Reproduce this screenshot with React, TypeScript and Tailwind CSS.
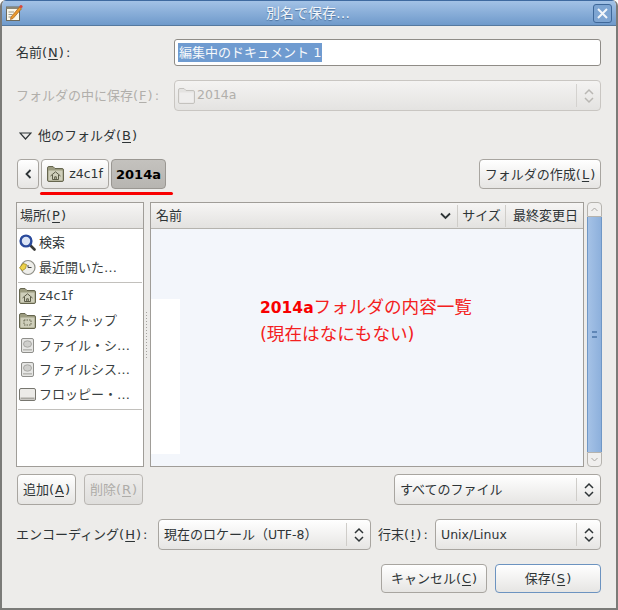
import * as React from "react"

const FONT = "font-['DejaVu_Sans','Noto_Sans_CJK_JP',sans-serif]"

function Mn({ children }: { children: React.ReactNode }) {
  return <span className="px-px underline underline-offset-2">{children}</span>
}

function Colon() {
  return <span className="ml-[2px]">:</span>
}

function Latin({ children }: { children: React.ReactNode }) {
  return <span className="text-[12.5px]">{children}</span>
}

function UpDown({ dim = false }: { dim?: boolean }) {
  const c = dim ? "#b9b7b3" : "#2e3436"
  return (
    <svg width="12" height="18" viewBox="0 0 12 18" fill="none" stroke={c} strokeWidth="1.5">
      <path d="M2 7 L6 3 L10 7" />
      <path d="M2 11 L6 15 L10 11" />
    </svg>
  )
}

function Combo({ className, children, dim = false }: { className: string; children: React.ReactNode; dim?: boolean }) {
  return (
    <div
      className={`flex items-center rounded-[4px] border ${
        dim
          ? "border-[#c9c6c2] bg-gradient-to-b from-[#f4f3f2] to-[#e4e3e1] text-[#b1afab]"
          : "border-[#a8a5a0] bg-gradient-to-b from-[#ffffff] to-[#e6e5e3] text-[#2e3436]"
      } ${className}`}
    >
      <div className="flex min-w-0 flex-1 items-center whitespace-nowrap">{children}</div>
      <div className={`my-[3px] flex w-[24px] items-center justify-center self-stretch border-l ${dim ? "border-[#d4d2cf]" : "border-[#cfcdc9]"}`}>
        <UpDown dim={dim} />
      </div>
    </div>
  )
}

function Btn({ className, children, dim = false, focus = false }: { className: string; children: React.ReactNode; dim?: boolean; focus?: boolean }) {
  return (
    <div
      className={`flex items-center justify-center rounded-[4px] border whitespace-nowrap ${
        focus ? "border-[#6c93c0]" : dim ? "border-[#b9b6b2]" : "border-[#a8a5a0]"
      } ${
        dim
          ? "bg-gradient-to-b from-[#eeedec] to-[#dfdedc] text-[#aeaca8]"
          : "bg-gradient-to-b from-[#ffffff] to-[#e6e5e3] text-[#2e3436]"
      } ${className}`}
    >
      {children}
    </div>
  )
}

function FolderIcon({ dim = false, home = false, desk = false }: { dim?: boolean; home?: boolean; desk?: boolean }) {
  const fill = dim ? "#e4e3e1" : "#9c9c80"
  const line = dim ? "#c4c2be" : "#66664f"
  return (
    <svg width="17" height="16" viewBox="0 0 17 16" className="shrink-0">
      <path d="M0.5 2 Q0.5 0.5 2 0.5 H6 L8 2.5 H15 Q16.5 2.5 16.5 4 V14 Q16.5 15.5 15 15.5 H2 Q0.5 15.5 0.5 14 Z" fill={fill} stroke={line} />
      <rect x="1.5" y="4.5" width="14" height="10" fill={dim ? "#efeeed" : "#cfcfbb"} />
      {home && <path d="M3.5 10 L8.5 5.8 L13.5 10 M5.5 9 V13.5 H11.5 V9 M7.7 13.5 V10.8 H9.3 V13.5" fill="none" stroke="#5c5c48" strokeWidth="1" />}
      {desk && <rect x="5" y="7" width="7" height="5" fill="none" stroke="#66664f" strokeDasharray="1.5 1" />}
    </svg>
  )
}

function SearchIcon() {
  return (
    <svg width="17" height="17" viewBox="0 0 17 17" className="shrink-0">
      <path d="M10.5 10.5 L15.5 15.5" stroke="#3a3a38" strokeWidth="2.6" strokeLinecap="round" />
      <circle cx="7" cy="7" r="5.4" fill="#dbe4f5" stroke="#2a4a9c" strokeWidth="2.4" />
    </svg>
  )
}

function ClockIcon() {
  return (
    <svg width="17" height="17" viewBox="0 0 17 17" className="shrink-0">
      <circle cx="9" cy="8.5" r="7" fill="#eeeeea" stroke="#8e8e86" strokeWidth="1.2" />
      <path d="M9 6 V8.5 H12.5" fill="none" stroke="#444" strokeWidth="1" />
      <path d="M0.5 9 L4 4.5 L7.5 5.5 L6.5 9.5 L3.5 11.5 Z" fill="#edd24a" stroke="#a08a20" strokeWidth="0.8" />
    </svg>
  )
}

function DriveIcon() {
  return (
    <svg width="17" height="17" viewBox="0 0 17 17" className="shrink-0">
      <rect x="2.5" y="1.5" width="12" height="14" rx="1.5" fill="#e6e6e4" stroke="#8f8f8b" />
      <ellipse cx="8.5" cy="7" rx="4" ry="3.2" fill="#cfcfcc" stroke="#a8a8a4" />
      <rect x="4" y="12" width="9" height="1.6" fill="#b9b9b5" />
    </svg>
  )
}

function FloppyIcon() {
  return (
    <svg width="17" height="15" viewBox="0 0 17 15" className="shrink-0">
      <rect x="0.5" y="1.5" width="16" height="12" rx="1.5" fill="#ecebe8" stroke="#77766f" />
      <rect x="1.5" y="10.5" width="14" height="2" fill="#a9a8a2" />
    </svg>
  )
}

function NoteIcon() {
  return (
    <svg width="18" height="18" viewBox="0 0 18 18">
      <rect x="1.5" y="3" width="13" height="13.5" fill="#fbf8ea" stroke="#6d6a5c" />
      <path d="M1.5 3 H14.5 V5 H1.5 Z" fill="#8a8778" />
      <path d="M3.5 8 H9 M3.5 10.5 H7.5 M3.5 13 H6.5" stroke="#9a988c" />
      <path d="M6 13 L14.5 3 L16.5 4.8 L8 14.5 L5.5 15.5 Z" fill="#e99a2c" stroke="#a8601a" strokeWidth="0.7" />
      <circle cx="16" cy="2.5" r="1.6" fill="#d8483c" />
    </svg>
  )
}

function Place({ icon, children, dark = false }: { icon: React.ReactNode; children: React.ReactNode; dark?: boolean }) {
  return (
    <div className={`flex h-[24.5px] items-center gap-[3px] pl-[2px] whitespace-nowrap ${dark ? "text-[#2e3436]" : "text-[#3a3f41]"}`}>
      <span className="flex w-[17px] justify-center">{icon}</span>
      {children}
    </div>
  )
}

export default function App() {
  return (
    <div className={`relative flex h-[610px] w-[618px] flex-col overflow-hidden rounded-t-[6px] border-x-2 border-b-2 border-[#7b7b78] bg-[#edecea] text-[13px] leading-none text-[#2e3436] ${FONT}`}>
      {/* title bar */}
      <div className="-mx-[2px] flex h-[26px] shrink-0 items-center justify-between border-t border-b border-t-[#3f6aa0] border-b-[#55799f] bg-gradient-to-b from-[#a3c2e6] to-[#6f9acb] px-[5px]">
        <NoteIcon />
        <span className="text-[14px] text-[#f2f6fb] [text-shadow:0_1px_1px_#4a6f9b]">別名で保存…</span>
        <div className="mr-[1px] flex h-[19px] w-[19px] items-center justify-center rounded-[3px] border border-[#3f6899] bg-[#7ea5d2]">
          <svg width="13" height="13" viewBox="0 0 13 13" stroke="#f3f6fa" strokeWidth="2" fill="none">
            <path d="M2 2 L11 11 M11 2 L2 11" />
          </svg>
        </div>
      </div>

      <div className="flex flex-1 flex-col pr-[15px] pl-[14px]">
        {/* name */}
        <div className="mt-[13px] flex h-[27px] items-center">
          <span className="w-[158px] shrink-0">名前(<Mn>N</Mn>)<Colon /></span>
          <div className="flex h-full flex-1 items-center rounded-[3px] border border-[#8f8c87] bg-white pl-[3px]">
            <span className="flex h-[19px] items-center bg-[#6f9bd0] pr-px pl-[1px] whitespace-pre text-[#f6f8fb]">編集中のドキュメント 1</span>
          </div>
        </div>

        {/* save in folder */}
        <div className="mt-[14px] flex h-[31px] items-center text-[#b1afab]">
          <span className="w-[158px] shrink-0">フォルダの中に保存(<Mn>F</Mn>)<Colon /></span>
          <Combo dim className="h-full flex-1">
            <span className="flex items-center gap-[2px] pl-[3px]">
              <FolderIcon dim />
              <Latin>2014a</Latin>
            </span>
          </Combo>
        </div>

        {/* expander */}
        <div className="mt-[17px] flex h-[15px] items-center gap-[6px] pl-[3px]">
          <svg width="13" height="8" viewBox="0 0 13 8" fill="none" stroke="#2e3436" strokeWidth="1.2">
            <path d="M1 1 H12 L6.5 7 Z" />
          </svg>
          <span>他のフォルダ(<Mn>B</Mn>)</span>
        </div>

        {/* path bar */}
        <div className="mt-[16px] flex h-[30px] items-stretch">
          <Btn className="ml-px w-[22px]">
            <svg width="7" height="10" viewBox="0 0 7 10" fill="none" stroke="#2e3436" strokeWidth="1.8">
              <path d="M5.5 1 L1.5 5 L5.5 9" />
            </svg>
          </Btn>
          <Btn className="ml-[2px] w-[68px] gap-[5px]">
            <FolderIcon home />
            <Latin>z4c1f</Latin>
          </Btn>
          <div className="ml-[2px] flex w-[55px] items-center justify-center rounded-[4px] border border-[#9a9792] bg-gradient-to-b from-[#c4c2be] to-[#b7b5b1] font-bold text-black">
            2014a
          </div>
          <div className="flex-1" />
          <Btn className="w-[122px]">
            フォルダの作成(<Mn>L</Mn>)
          </Btn>
        </div>

        {/* file panes */}
        <div className="mt-[13px] flex h-[265px] items-stretch">
          <div className="flex w-[128px] shrink-0 flex-col border border-[#a09d98] bg-white">
            <div className="flex h-[26px] shrink-0 items-center border-b border-[#b5b3ae] bg-gradient-to-b from-[#f6f5f4] to-[#e3e2e0] pl-[3px]">
              場所(<Mn>P</Mn>)
            </div>
            <div className="pt-px">
              <Place icon={<SearchIcon />} dark>検索</Place>
              <div className="h-px" />
              <Place icon={<ClockIcon />}>最近開いた…</Place>
              <div className="mx-px mt-[2px] mb-px h-px bg-[#c2c0bc]" />
              <Place icon={<FolderIcon home />}><Latin>z4c1f</Latin></Place>
              <Place icon={<FolderIcon desk />}>デスクトップ</Place>
              <Place icon={<DriveIcon />}>ファイル・シ…</Place>
              <Place icon={<DriveIcon />}>ファイルシス…</Place>
              <Place icon={<FloppyIcon />}>フロッピー・…</Place>
              <div className="mx-px mt-[2px] h-px bg-[#c2c0bc]" />
            </div>
          </div>

          <div className="flex w-[6px] shrink-0 items-center justify-center">
            <div className="h-[48px] w-[4px] bg-[radial-gradient(#a5a39f_0.7px,transparent_0.8px)] bg-[length:3px_3px]" />
          </div>

          <div className="flex w-[434px] shrink-0 flex-col border border-[#a09d98] bg-[#f3f6fb]">
            <div className="flex h-[26px] shrink-0 items-center border-b border-[#b5b3ae] bg-gradient-to-b from-[#f6f5f4] to-[#e3e2e0]">
              <div className="flex flex-1 items-center justify-between pr-[6px] pl-[5px]">
                <span>名前</span>
                <svg width="11" height="8" viewBox="0 0 11 8" fill="none" stroke="#2e3436" strokeWidth="1.8">
                  <path d="M1 1.5 L5.5 6 L10 1.5" />
                </svg>
              </div>
              <div className="flex h-[22px] w-[48px] items-center justify-center border-l border-[#cfcdc9]">サイズ</div>
              <div className="flex h-[22px] w-[78px] items-center border-l border-[#cfcdc9] pl-[7px] whitespace-nowrap">最終変更日</div>
            </div>
            <div className="relative flex-1 bg-[#f3f6fb]">
              <div className="absolute top-[70px] left-0 h-[155px] w-[29px] bg-white" />
              <div className="absolute top-[65px] left-[109px] text-[17.6px] leading-[26px] whitespace-nowrap text-[#f42020]">
                <div><span className="text-[15.5px] font-bold text-[#f80000]">2014a</span>フォルダの内容一覧</div>
                <div>(現在はなにもない)</div>
              </div>
            </div>
          </div>

          <div className="ml-[3px] flex w-[15px] shrink-0 flex-col">
            <div className="flex h-[15px] items-center justify-center rounded-t-[4px] border border-[#b5b3ae] bg-[#f0efee]">
              <svg width="7" height="5" viewBox="0 0 7 5" fill="none" stroke="#a9a7a3"><path d="M0.5 4 L3.5 1 L6.5 4" /></svg>
            </div>
            <div className="flex flex-1 items-center justify-center border-x border-[#6f97c6] bg-gradient-to-r from-[#a5c2e6] to-[#8db0dc]">
              <div className="h-[7px] w-[5px] border-y-2 border-double border-[#5f86b6]" />
            </div>
            <div className="flex h-[15px] items-center justify-center rounded-b-[4px] border border-[#b5b3ae] bg-[#f0efee]">
              <svg width="7" height="5" viewBox="0 0 7 5" fill="none" stroke="#a9a7a3"><path d="M0.5 1 L3.5 4 L6.5 1" /></svg>
            </div>
          </div>
        </div>

        {/* add / remove + filter */}
        <div className="mt-[7px] flex h-[31px] items-stretch">
          <Btn className="ml-px w-[59px]">追加(<Mn>A</Mn>)</Btn>
          <Btn dim className="ml-[8px] w-[59px]">削除(<Mn>R</Mn>)</Btn>
          <div className="flex-1" />
          <Combo className="w-[207px]">
            <span className="pl-[5px]">すべてのファイル</span>
          </Combo>
        </div>

        {/* encoding */}
        <div className="mt-[14px] flex h-[31px] items-stretch">
          <span className="flex w-[142px] shrink-0 items-center">エンコーディング(<Mn>H</Mn>)<Colon /></span>
          <Combo className="w-[213px]">
            <span className="pl-[5px]">現在のロケール（<Latin>UTF-8</Latin>）</span>
          </Combo>
          <span className="ml-[7px] flex w-[57px] shrink-0 items-center">行末(<Mn>!</Mn>)<Colon /></span>
          <Combo className="flex-1">
            <span className="pl-[5px]"><Latin>Unix/Linux</Latin></span>
          </Combo>
        </div>

        {/* actions */}
        <div className="mt-[14px] flex h-[29px] items-stretch justify-end gap-[8px]">
          <Btn className="w-[106px]">キャンセル(<Mn>C</Mn>)</Btn>
          <Btn focus className="w-[106px]">保存(<Mn>S</Mn>)</Btn>
        </div>
      </div>

      {/* red hand-drawn annotation under the path bar */}
      <div className="absolute top-[192px] left-[38px] h-[3px] w-[133px] rounded-full bg-[#f80000]" />
    </div>
  )
}
